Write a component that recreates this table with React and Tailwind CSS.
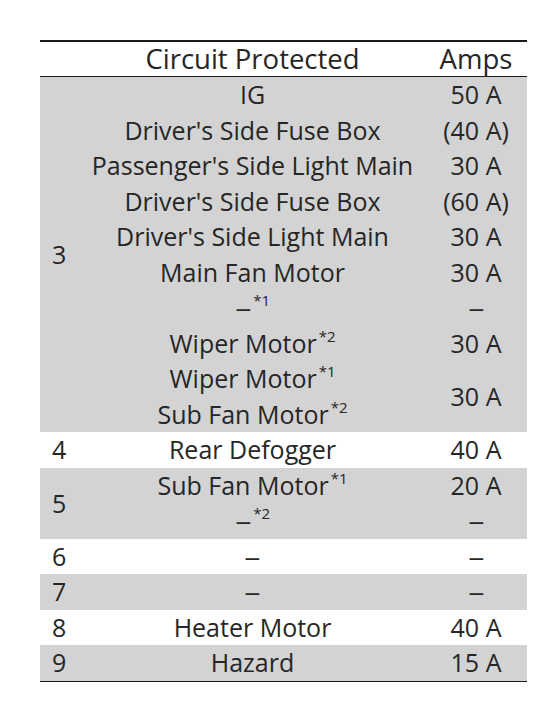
import React from "react";

const FONT = { fontFamily: '"Open Sans", "Noto Sans", sans-serif' };

function Sup({ children }) {
  return <sup className="text-[15px] relative -top-[7px] ml-[2px] leading-none">{children}</sup>;
}

// the manual's dashes are a bit wider than Open Sans' en dash
const Dash = () => <span className="inline-block scale-x-[1.3] mx-[2px]">–</span>;

const Line = ({ children, double }) => (
  <div className={(double ? "h-[71px]" : "h-[35.5px]") + " flex items-center justify-center"}>
    {children}
  </div>
);

export default function App() {
  return (
    <div className="bg-white w-[541px] h-[722px] pt-[40px] pl-[40px] text-[#262626]" style={FONT}>
      <div className="w-[487px] border-t-2 border-b border-[#1a1a1a] text-[25px] leading-none">
        {/* header */}
        <div className="grid grid-cols-[40px_345px_102px] h-[35px] border-b border-[#1a1a1a] items-center text-[27.5px]">
          <div />
          <div className="text-center">Circuit Protected</div>
          <div className="text-center">Amps</div>
        </div>

        {/* 3 */}
        <div className="grid grid-cols-[40px_345px_102px] bg-[#d3d3d3]">
          <div className="flex items-center pl-[12px]">3</div>
          <div>
            <Line>IG</Line>
            <Line>Driver's Side Fuse Box</Line>
            <Line>Passenger's Side Light Main</Line>
            <Line>Driver's Side Fuse Box</Line>
            <Line>Driver's Side Light Main</Line>
            <Line>Main Fan Motor</Line>
            <Line><Dash /><Sup>*1</Sup></Line>
            <Line>Wiper Motor<Sup>*2</Sup></Line>
            <Line>Wiper Motor<Sup>*1</Sup></Line>
            <Line>Sub Fan Motor<Sup>*2</Sup></Line>
          </div>
          <div>
            <Line>50 A</Line>
            <Line>(40 A)</Line>
            <Line>30 A</Line>
            <Line>(60 A)</Line>
            <Line>30 A</Line>
            <Line>30 A</Line>
            <Line><Dash /></Line>
            <Line>30 A</Line>
            <Line double>30 A</Line>
          </div>
        </div>

        {/* 4 */}
        <div className="grid grid-cols-[40px_345px_102px]">
          <div className="flex items-center pl-[12px]">4</div>
          <Line>Rear Defogger</Line>
          <Line>40 A</Line>
        </div>

        {/* 5 */}
        <div className="grid grid-cols-[40px_345px_102px] bg-[#d3d3d3]">
          <div className="flex items-center pl-[12px]">5</div>
          <div>
            <Line>Sub Fan Motor<Sup>*1</Sup></Line>
            <Line><Dash /><Sup>*2</Sup></Line>
          </div>
          <div>
            <Line>20 A</Line>
            <Line><Dash /></Line>
          </div>
        </div>

        {[
          ["6", null, null, false],
          ["7", null, null, true],
          ["8", "Heater Motor", "40 A", false],
          ["9", "Hazard", "15 A", true],
        ].map(([n, c, a, gray]) => (
          <div key={n} className={"grid grid-cols-[40px_345px_102px] " + (gray ? "bg-[#d3d3d3]" : "")}>
            <div className="flex items-center pl-[12px]">{n}</div>
            <Line>{c ?? <Dash />}</Line>
            <Line>{a ?? <Dash />}</Line>
          </div>
        ))}
      </div>
    </div>
  );
}
